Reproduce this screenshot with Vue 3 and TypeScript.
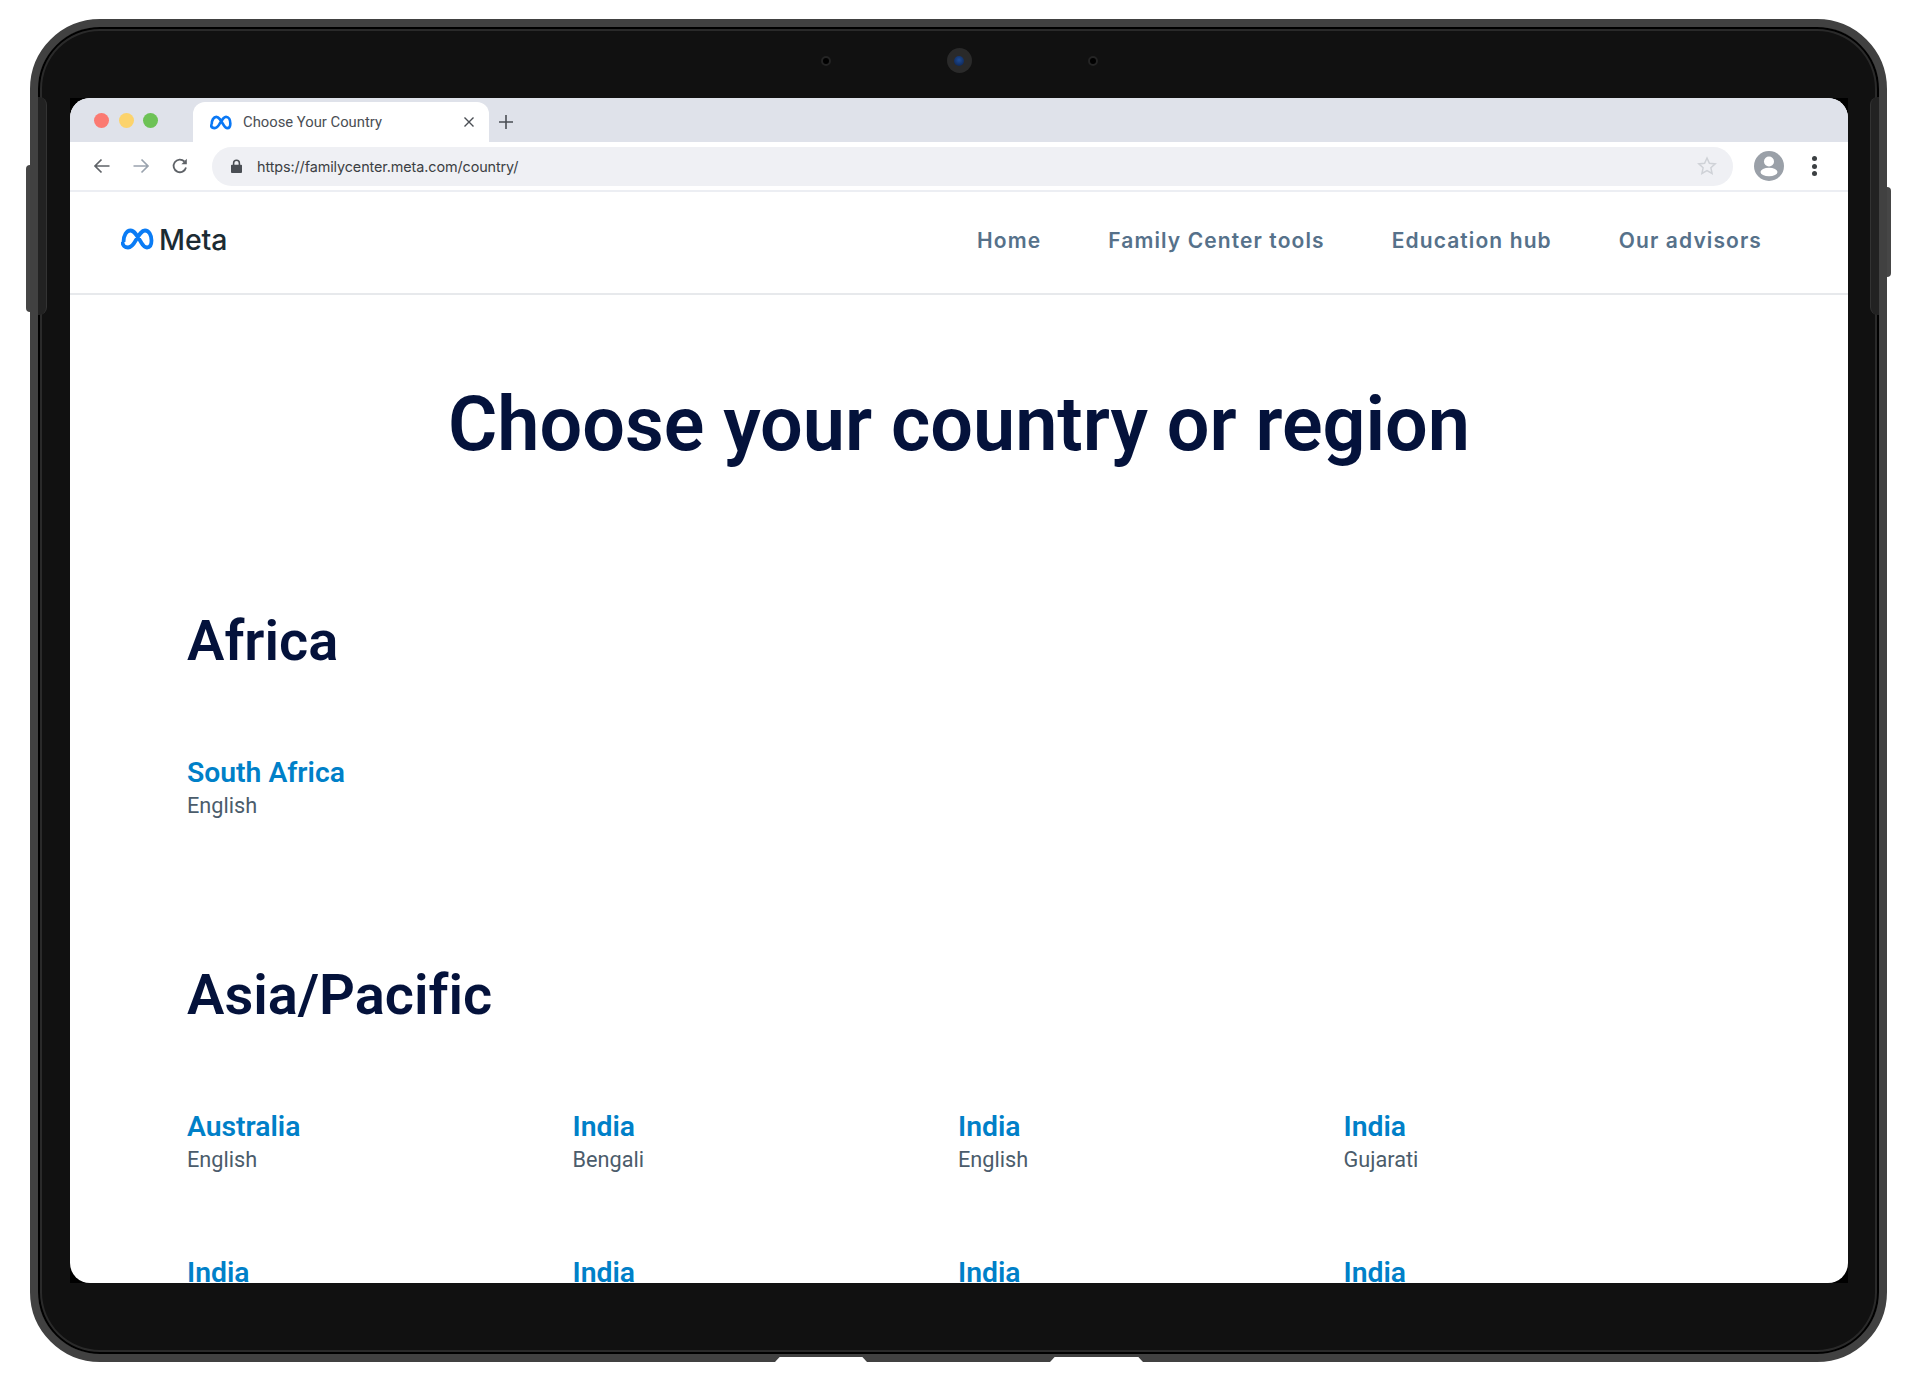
<script setup lang="ts">
interface Place { country: string; language: string }
interface Region { name: string; places: Place[] }
const regions: Region[] = [
  { name: 'Africa', places: [{ country: 'South Africa', language: 'English' }] },
  {
    name: 'Asia/Pacific',
    places: [
      { country: 'Australia', language: 'English' },
      { country: 'India', language: 'Bengali' },
      { country: 'India', language: 'English' },
      { country: 'India', language: 'Gujarati' },
      { country: 'India', language: 'Hindi' },
      { country: 'India', language: 'Kannada' },
      { country: 'India', language: 'Malayalam' },
      { country: 'India', language: 'Marathi' },
    ],
  },
]
const nav = ['Home', 'Family Center tools', 'Education hub', 'Our advisors']
const metaPath = 'M2.5 14C2.5 7.5 5.5 2.500 9.500 2.500c4 0 7 5.500 11 12.500 2 3.400 3.500 4.500 5.500 4.500 3 0 4.500-3 4.500-7 0-5.500-2.500-10-6.500-10-3.500 0-6 4.500-9 9.500-3 5.500-5 7.500-8 7.500-3 0-5.500-2-5.500-5.500'
</script>

<template>
  <div class="stage">
    <div class="device">
      <span class="btn btn-left"></span>
      <span class="btn btn-right"></span>
      <span class="strip strip-left"></span>
      <span class="strip strip-right"></span>
      <span class="notch notch-a"></span>
      <span class="notch notch-b"></span>

      <div class="bezel-top">
        <span class="sensor"></span>
        <span class="camera"><i></i></span>
        <span class="sensor"></span>
      </div>

      <div class="screen-back">
        <div class="screen">
          <div class="tabstrip">
            <div class="lights">
              <span class="light red"></span>
              <span class="light yellow"></span>
              <span class="light green"></span>
            </div>
            <div class="tab">
              <svg class="favicon" viewBox="0 0 33 22" fill="none"><path :d="metaPath" stroke="#0a78f5" stroke-width="4" /></svg>
              <span class="tab-title">Choose Your Country</span>
              <svg class="tab-close" viewBox="0 0 12 12"><path d="M1.5 1.5l9 9M10.5 1.5l-9 9" stroke="#4a4e54" stroke-width="1.4" /></svg>
            </div>
            <svg class="tab-plus" viewBox="0 0 14 14"><path d="M7 0v14M0 7h14" stroke="#4a4e54" stroke-width="1.6" /></svg>
          </div>

          <div class="toolbar">
            <svg class="tool" viewBox="0 0 18 18" fill="none"><path d="M16.5 9H2M8.5 2.5L2 9l6.500 6.500" stroke="#5f6368" stroke-width="1.7" /></svg>
            <svg class="tool" viewBox="0 0 18 18" fill="none"><path d="M1.5 9H16M9.500 2.500L16 9l-6.500 6.500" stroke="#9aa3ae" stroke-width="1.7" /></svg>
            <svg class="tool" viewBox="0 0 18 18" fill="none"><path d="M15 10.500A6.300 6.300 0 1 1 13.400 4.500" stroke="#5f6368" stroke-width="1.8" /><path d="M15.800 1.800v5.400h-5.400z" fill="#5f6368" /></svg>
            <div class="omnibox">
              <svg class="lock" viewBox="0 0 12 15"><path d="M2 6V4.300a4 4 0 0 1 8 0V6h1a1 1 0 0 1 1 1v7a1 1 0 0 1-1 1H1a1 1 0 0 1-1-1V7a1 1 0 0 1 1-1zm1.700 0h4.600V4.300a2.300 2.300 0 0 0-4.600 0z" fill="#4a4e54" /></svg>
              <span class="url">https://familycenter.meta.com/country/</span>
              <svg class="star" viewBox="0 0 20 20" fill="none"><path d="M10 2l2.400 5.300 5.800.6-4.300 3.900 1.200 5.700L10 14.600l-5.100 2.900 1.200-5.700-4.300-3.900 5.800-.6z" stroke="#cfd2d7" stroke-width="1.500" /></svg>
            </div>
            <svg class="avatar" viewBox="0 0 30 30"><circle cx="15" cy="15" r="15" fill="#9aa0a8" /><circle cx="15" cy="10.500" r="5" fill="#fff" /><ellipse cx="15" cy="21" rx="8.500" ry="4.300" fill="#fff" /></svg>
            <div class="dots"><i></i><i></i><i></i></div>
          </div>

          <header class="site-header">
            <div class="logo">
              <svg class="logo-mark" viewBox="0 0 33 22" fill="none"><path :d="metaPath" stroke="#0a7cf5" stroke-width="3.800" /></svg>
              <span class="logo-text">Meta</span>
            </div>
            <nav class="site-nav">
              <a v-for="item in nav" :key="item">{{ item }}</a>
            </nav>
          </header>

          <main class="page">
            <h1>Choose your country or region</h1>
            <section v-for="region in regions" :key="region.name" class="region">
              <h2>{{ region.name }}</h2>
              <div class="grid">
                <div v-for="place in region.places" :key="place.country + place.language" class="place">
                  <a>{{ place.country }}</a>
                  <span>{{ place.language }}</span>
                </div>
              </div>
            </section>
          </main>
        </div>
      </div>
    </div>
  </div>
</template>

<style>
html, body { margin: 0; background: #fff; }
</style>

<style scoped>
* { box-sizing: border-box; }
.stage {
  width: 1920px;
  height: 1385px;
  padding: 19px 33px 23px 30px;
  background: #fff;
  overflow: hidden;
}
.device {
  position: relative;
  height: 100%;
  border-radius: 70px;
  background: #111;
  border: 8px solid #414141;
  box-shadow: inset 0 0 0 2px #000, inset 0 0 0 4px #2a2a2a;
  display: flex;
  flex-direction: column;
  padding: 0 31px 71px 32px;
}
.btn { position: absolute; background: #464646; }
.btn-left { left: -12px; top: 138px; width: 4px; height: 147px; border-radius: 4px 0 0 4px; }
.btn-right { right: -12px; top: 160px; width: 4px; height: 90px; border-radius: 0 4px 4px 0; }
.strip { position: absolute; top: 70px; width: 9px; height: 218px; background: #222; }
.strip-left { left: 0; border-right: 1px solid #333; border-radius: 0 8px 8px 0; }
.strip-right { right: 0; border-left: 1px solid #333; border-radius: 8px 0 0 8px; }
.notch { position: absolute; bottom: -8px; height: 5px; background: #fff; clip-path: polygon(5% 0, 95% 0, 100% 100%, 0 100%); }
.notch-a { left: 737px; width: 92px; }
.notch-b { left: 1012px; width: 93px; }
.bezel-top {
  height: 71px;
  flex: none;
  display: flex;
  align-items: center;
  justify-content: center;
  gap: 116px;
  padding-bottom: 4px;
}
.sensor { width: 10px; height: 10px; border-radius: 50%; background: #000; border: 2px solid #242424; }
.camera {
  width: 25px;
  height: 25px;
  border-radius: 50%;
  background: #2a2a2a;
  display: flex;
  align-items: center;
  justify-content: center;
}
.camera i { width: 10px; height: 10px; border-radius: 50%; background: radial-gradient(circle at 50% 40%, #1d4c96, #0c1f48); }
.screen-back { flex: 1; background: #000; min-height: 0; }
.screen {
  height: 100%;
  background: #fff;
  border-radius: 20px;
  overflow: hidden;
  display: flex;
  flex-direction: column;
}
.tabstrip {
  height: 44px;
  flex: none;
  background: #dfe2ea;
  display: flex;
  align-items: flex-end;
  padding-left: 24px;
}
.lights { display: flex; gap: 9.500px; width: 99px; align-self: flex-start; padding-top: 15px; }
.light { width: 15px; height: 15px; border-radius: 50%; flex: none; }
.red { background: #fb7a72; }
.yellow { background: #fcd36c; }
.green { background: #6dc256; }
.tab {
  width: 296px;
  height: 40px;
  background: #fff;
  border-radius: 12px 12px 0 0;
  display: flex;
  align-items: center;
  padding: 0 14px 0 17px;
}
.favicon { width: 22px; height: 15px; }
.tab-title { margin-left: 11px; font: 400 14.800px Roboto, sans-serif; color: #4a4e54; flex: 1; }
.tab-close { width: 12px; height: 12px; }
.tab-plus { width: 14px; height: 14px; margin: 0 0 13px 10px; }
.toolbar {
  height: 50px;
  flex: none;
  display: flex;
  align-items: center;
  padding: 0 21px 0 23px;
  border-bottom: 2px solid #eceef3;
}
.tool { width: 18px; height: 18px; margin-right: 21px; }
.omnibox {
  margin-left: 2px;
  width: 1521px;
  height: 39px;
  background: #eff0f4;
  border-radius: 20px;
  display: flex;
  align-items: center;
  padding: 0 16px 0 19px;
}
.lock { width: 11px; height: 14px; }
.url { margin-left: 15px; font: 400 14.400px Inter, sans-serif; color: #3c4043; letter-spacing: -.1px; flex: 1; }
.star { width: 20px; height: 20px; }
.avatar { width: 30px; height: 30px; margin-left: 21px; }
.dots { margin-left: 28px; display: flex; flex-direction: column; gap: 2.500px; }
.dots i { width: 5px; height: 5px; border-radius: 50%; background: #3c4043; }
.site-header {
  height: 103px;
  flex: none;
  border-bottom: 2px solid #e7e9ec;
  display: flex;
  align-items: center;
  justify-content: space-between;
  padding: 0 86px 0 51px;
}
.logo { display: flex; align-items: center; gap: 5px; margin-top: -7px; }
.logo-mark { width: 33px; height: 22px; }
.logo-text { font: 500 28.500px Inter, sans-serif; color: #1c2b33; letter-spacing: -.1px; }
.site-nav { display: flex; gap: 67px; margin-top: -5px; }
.site-nav a { font: 600 21px Inter, sans-serif; letter-spacing: 1.100px; color: #56718a; }
.page { padding: 87px 117px 0; font-family: Roboto, sans-serif; font-variant-ligatures: none; }
h1 {
  margin: 0 -117px 141px;
  text-align: center;
  font-size: 75.500px;
  line-height: 84px;
  font-weight: 600;
  color: #04123b;
}
.region { margin-bottom: 139px; }
h2 { margin: 0 0 81px; font-size: 56px; line-height: 68px; font-weight: 600; color: #04123b; }
.grid { display: grid; grid-template-columns: repeat(4, 385.500px); row-gap: 80px; }
.place { display: flex; flex-direction: column; }
.place a { font-size: 28.300px; line-height: 34px; font-weight: 600; color: #0080c8; }
.place span { font-size: 21.700px; line-height: 32px; color: #4b5c6b; }
</style>
